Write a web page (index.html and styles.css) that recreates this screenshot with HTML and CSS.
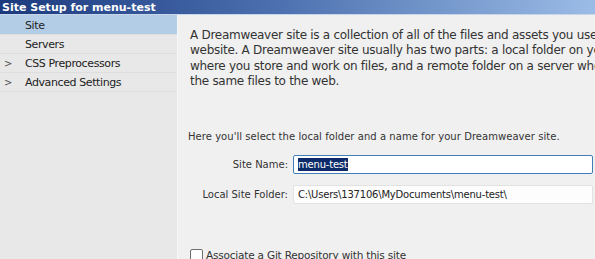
FILE: index.html
```html
<!DOCTYPE html>
<html lang="en">
<head>
    <meta charset="UTF-8">
    <title>Site Setup for menu-test</title>
    <link rel="stylesheet" href="styles.css">
</head>
<body>
    <div class="window">
        <header class="titlebar">Site Setup for menu-test</header>

        <div class="main">
            <nav class="sidebar">
                <div class="nav-item selected"><span class="arrow"></span>Site</div>
                <div class="nav-item"><span class="arrow"></span>Servers</div>
                <div class="nav-item"><span class="arrow">&gt;</span>CSS Preprocessors</div>
                <div class="nav-item"><span class="arrow">&gt;</span>Advanced Settings</div>
            </nav>

            <section class="panel">
                <p class="intro">
                    A Dreamweaver site is a collection of all of the files and assets you use in your<br>
                    website. A Dreamweaver site usually has two parts: a local folder on your computer<br>
                    where you store and work on files, and a remote folder on a server where you post<br>
                    the same files to the web.
                </p>

                <p class="hint">Here you'll select the local folder and a name for your Dreamweaver site.</p>

                <div class="fields">
                    <label for="siteName">Site Name:</label>
                    <div class="field focused"><span class="selection">menu-test</span></div>

                    <label for="localFolder">Local Site Folder:</label>
                    <div class="field">C:\Users\137106\MyDocuments\menu-test\</div>
                </div>

                <label class="git">
                    <span class="checkbox"></span>
                    Associate a Git Repository with this site
                </label>
            </section>
        </div>
    </div>
</body>
</html>
```

FILE: styles.css
```css
body {
    margin: 0;
    font-family: "DejaVu Sans", Verdana, sans-serif;
    background: #f0f0f0;
}

.window {
    width: 595px;
    height: 259px;
    overflow: hidden;
}

.titlebar {
    height: 15px;
    line-height: 15px;
    padding-left: 2px;
    font-size: 11px;
    font-weight: bold;
    color: white;
    background: linear-gradient(to right, #1b3a7e 0%, #4a6eae 45%, #9bbce6 100%);
    border-bottom: 1px solid #c9d6ea;
    box-sizing: border-box;
}

.main {
    display: flex;
    height: 244px;
}

.sidebar {
    width: 177px;
    background: #e8e8e8;
    border-right: 1px solid #f7f7f7;
    flex-shrink: 0;
}

.nav-item {
    display: flex;
    align-items: center;
    height: 18px;
    padding-top: 1px;
    margin-top: -1px;
    border-bottom: 1px solid #dedede;
    font-size: 11px;
    letter-spacing: -0.4px;
    color: #222;
}

.nav-item:first-child {
    margin-top: 0;
}

.nav-item.selected {
    background: #b4cde7;
}

.arrow {
    width: 25px;
    padding-left: 4px;
    box-sizing: border-box;
    font-size: 10px;
    color: #555;
}

.panel {
    flex: 1;
    padding: 13px 0 0 12px;
    background: #f0f0f0;
    color: #222;
    white-space: nowrap;
    overflow: hidden;
}

.intro {
    margin: 0;
    font-size: 12px;
    letter-spacing: -0.28px;
    line-height: 15.4px;
    color: #333;
}

.hint {
    margin: 41px 0 0 -2px;
    font-size: 10px;
    letter-spacing: 0.05px;
    color: #333;
}

.fields {
    display: grid;
    grid-template-columns: 98px 300px;
    column-gap: 5px;
    row-gap: 11px;
    align-items: center;
    margin-top: 13px;
    font-size: 10px;
    color: #333;
}

.fields label {
    text-align: right;
}

.field {
    height: 19px;
    line-height: 17px;
    padding-left: 4px;
    box-sizing: border-box;
    background: #fdfdfd;
    border: 1px solid #e2e2e2;
    border-radius: 2px;
    font-size: 10px;
    letter-spacing: -0.2px;
    color: #222;
}

.field.focused {
    border-color: #3f7fb8;
    background: #fff;
}

.selection {
    background: #0c2b6a;
    color: white;
    padding: 1px 0;
}

.git {
    display: flex;
    align-items: center;
    gap: 3px;
    margin-top: 45px;
    font-size: 10.5px;
    letter-spacing: -0.2px;
    color: #333;
}

.checkbox {
    width: 11px;
    height: 11px;
    border: 1px solid #6e6e6e;
    border-radius: 2px;
    background: #fff;
}
```
